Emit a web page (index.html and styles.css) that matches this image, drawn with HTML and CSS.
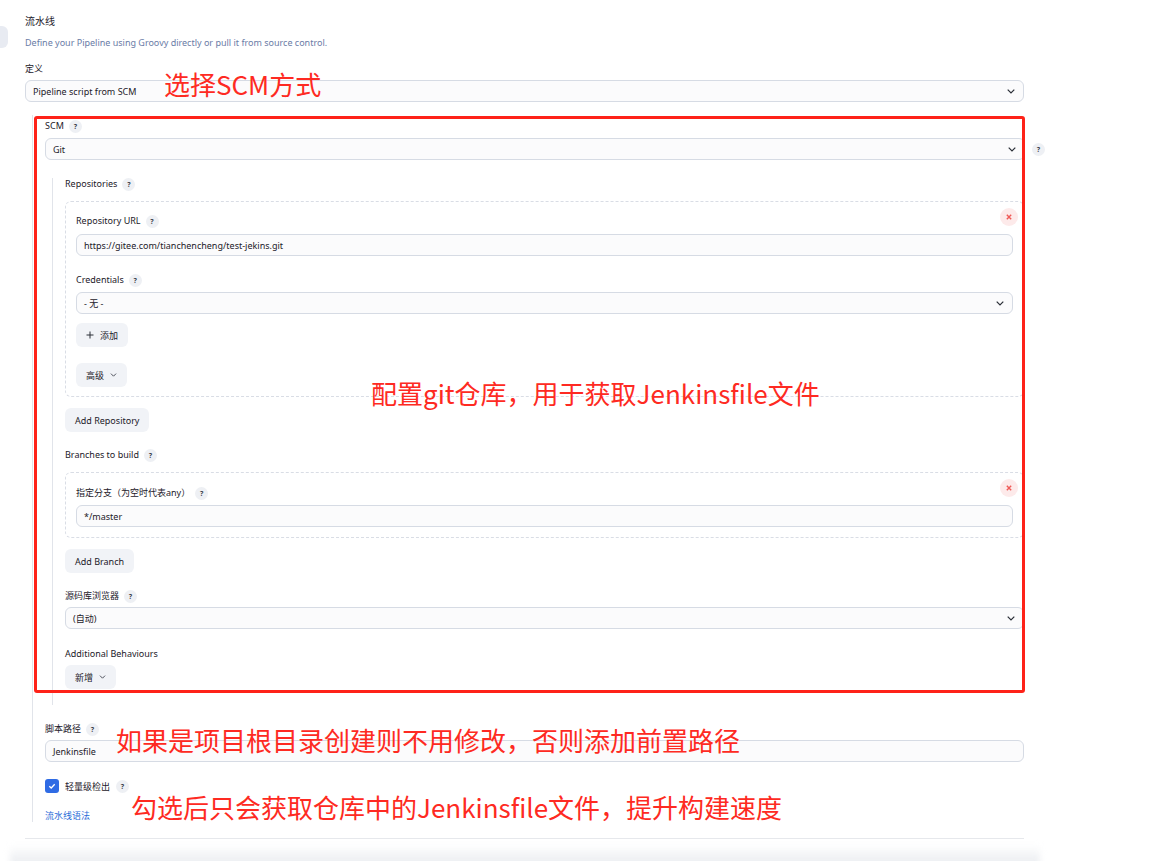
FILE: index.html
```html
<!DOCTYPE html>
<html lang="zh-CN">
<head>
<meta charset="utf-8">
<title>流水线</title>
<link rel="stylesheet" href="styles.css">
</head>
<body>
<div class="layout">
  <aside class="side"><div class="side-item"></div></aside>
  <main class="main">
    <div class="title">流水线</div>
    <div class="desc">Define your Pipeline using Groovy directly or pull it from source control.</div>
    <div class="label mt14">定义</div>
    <div class="ctl select mt5"><span>Pipeline script from SCM</span><svg class="chev" viewBox="0 0 8 5"><path d="M0.7 0.7L4 4L7.3 0.7"/></svg></div>

    <div class="nest nest1">
      <div class="label">SCM <span class="help">?</span></div>
      <div class="row-help mt6">
        <div class="ctl select grow"><span>Git</span><svg class="chev" viewBox="0 0 8 5"><path d="M0.7 0.7L4 4L7.3 0.7"/></svg></div>
        <span class="help">?</span>
      </div>

      <div class="nest nest2">
        <div class="label">Repositories <span class="help">?</span></div>
        <div class="repeat repo">
          <span class="close"><svg viewBox="0 0 6 6"><path d="M0.8 0.8L5.2 5.2M5.2 0.8L0.8 5.2"/></svg></span>
          <div class="label">Repository URL <span class="help">?</span></div>
          <div class="ctl mt7">https://gitee.com/tianchencheng/test-jekins.git</div>
          <div class="label mt18">Credentials <span class="help">?</span></div>
          <div class="ctl select mt6"><span>- 无 -</span><svg class="chev" viewBox="0 0 8 5"><path d="M0.7 0.7L4 4L7.3 0.7"/></svg></div>
          <div class="btn mt9"><svg class="plus" viewBox="0 0 8 8"><path d="M4 0.5V7.5M0.5 4H7.5"/></svg>添加</div>
          <div class="btn mt16">高级<svg class="chev-sm" viewBox="0 0 8 5"><path d="M0.8 0.8L4 4L7.2 0.8"/></svg></div>
        </div>
        <div class="btn mt11">Add Repository</div>

        <div class="label mt17">Branches to build <span class="help">?</span></div>
        <div class="repeat branch">
          <span class="close"><svg viewBox="0 0 6 6"><path d="M0.8 0.8L5.2 5.2M5.2 0.8L0.8 5.2"/></svg></span>
          <div class="label">指定分支（为空时代表any） <span class="help">?</span></div>
          <div class="ctl mt6">*/master</div>
        </div>
        <div class="btn mt11">Add Branch</div>

        <div class="label mt17">源码库浏览器 <span class="help">?</span></div>
        <div class="ctl select mt5"><span>(自动)</span><svg class="chev" viewBox="0 0 8 5"><path d="M0.7 0.7L4 4L7.3 0.7"/></svg></div>

        <div class="label mt19">Additional Behaviours</div>
        <div class="btn mt5">新增<svg class="chev-sm" viewBox="0 0 8 5"><path d="M0.8 0.8L4 4L7.2 0.8"/></svg></div>
      </div>

      <div class="label mt18">脚本路径 <span class="help">?</span></div>
      <div class="ctl mt5">Jenkinsfile</div>

      <div class="check-row">
        <span class="checkbox"><svg viewBox="0 0 10 10"><path d="M2.3 5.2L4.2 7L7.7 3.2"/></svg></span>
        <span>轻量级检出</span>
        <span class="help">?</span>
      </div>
      <a class="link">流水线语法</a>
    </div>

    <div class="divider"></div>
    <div class="footer-fade"></div>
  </main>
</div>

<div class="annot-box"></div>
<div class="annot a1">选择SCM方式</div>
<div class="annot a2">配置git仓库，用于获取Jenkinsfile文件</div>
<div class="annot a3">如果是项目根目录创建则不用修改，否则添加前置路径</div>
<div class="annot a4">勾选后只会获取仓库中的Jenkinsfile文件，提升构建速度</div>
</body>
</html>
```

FILE: styles.css
```css
html, body {
  margin: 0;
  padding: 0;
}
body {
  font-family: "Noto Sans", "Noto Sans CJK SC", sans-serif;
  font-size: 9px;
  color: #1c2029;
  background: #ffffff;
  width: 1169px;
  height: 861px;
  overflow: hidden;
  position: relative;
}
.layout {
  display: flex;
}
.side {
  width: 8px;
  padding-top: 26px;
}
.side-item {
  height: 22px;
  background: #e8ebf2;
  border-radius: 0 6px 6px 0;
}
.main {
  margin-left: 17px;
  width: 999px;
  padding-top: 15px;
}
.title {
  font-size: 10px;
  line-height: 12px;
  height: 12px;
}
.desc {
  margin-top: 10px;
  line-height: 12px;
  height: 12px;
  color: #6a7ca6;
}
.label {
  display: flex;
  align-items: center;
  gap: 5px;
  height: 12px;
  line-height: 12px;
  white-space: nowrap;
}
.help {
  width: 13px;
  height: 13px;
  flex: none;
  border-radius: 50%;
  background: #eef0f4;
  color: #3a3f4a;
  font-size: 7px;
  font-weight: 700;
  line-height: 13px;
  text-align: center;
}
.ctl {
  height: 22px;
  box-sizing: border-box;
  border: 1px solid #d6dbe4;
  border-radius: 6px;
  background: #fbfbfc;
  display: flex;
  align-items: center;
  padding: 0 8px 0 7px;
  white-space: nowrap;
}
.select {
  justify-content: space-between;
}
.chev {
  width: 8px;
  height: 5px;
  fill: none;
  stroke: #2a2e36;
  stroke-width: 1.2;
}
.grow {
  flex: 1;
}
.row-help {
  display: flex;
  align-items: center;
  gap: 7px;
  margin-right: -21px;
}
.nest {
  border-left: 1px solid #e1e4ea;
  margin-left: 7px;
  padding-left: 12px;
}
.nest1 {
  margin-top: 13px;
  padding-top: 5px;
}
.nest2 {
  margin-top: 18px;
  padding-bottom: 16px;
}
.repeat {
  position: relative;
  margin-top: 11px;
  border: 1px dashed #d9dde5;
  border-radius: 6px;
  padding: 13px 10px 9px 10px;
}
.repeat.branch {
  padding-top: 14px;
  padding-bottom: 10px;
}
.close {
  position: absolute;
  top: 6px;
  right: 5px;
  width: 18px;
  height: 18px;
  border-radius: 50%;
  background: #fdeaea;
  display: flex;
  align-items: center;
  justify-content: center;
}
.close svg {
  width: 6px;
  height: 6px;
  fill: none;
  stroke: #ef5a57;
  stroke-width: 1.4;
}
.btn {
  display: flex;
  width: max-content;
  align-items: center;
  gap: 6px;
  height: 24px;
  box-sizing: border-box;
  padding: 0 10px;
  border-radius: 6px;
  background: #f1f3f7;
  white-space: nowrap;
}
.plus {
  width: 8px;
  height: 8px;
  fill: none;
  stroke: #2a2e36;
  stroke-width: 1;
}
.chev-sm {
  width: 7px;
  height: 4px;
  fill: none;
  stroke: #3a3f4a;
  stroke-width: 1.1;
}
.check-row {
  margin-top: 17px;
  display: flex;
  align-items: center;
  gap: 6px;
  height: 14px;
}
.checkbox {
  width: 14px;
  height: 14px;
  border-radius: 3px;
  background: #2f6be4;
  display: flex;
  align-items: center;
  justify-content: center;
}
.checkbox svg {
  width: 10px;
  height: 10px;
  fill: none;
  stroke: #ffffff;
  stroke-width: 1.3;
}
.link {
  display: block;
  margin-top: 17px;
  line-height: 12px;
  height: 12px;
  color: #2a6bd8;
}
.divider {
  margin-top: 16px;
  height: 1px;
  background: #e6e8ec;
}
.footer-fade {
  margin-top: 6px;
  margin-left: -15px;
  width: 1030px;
  height: 24px;
  background: linear-gradient(to bottom, rgba(240, 241, 244, 0), #eef0f3 60%);
  filter: blur(3px);
}
.mt5 { margin-top: 5px; }
.mt6 { margin-top: 6px; }
.mt7 { margin-top: 7px; }
.mt9 { margin-top: 9px; }
.mt11 { margin-top: 11px; }
.mt14 { margin-top: 14px; }
.mt16 { margin-top: 16px; }
.mt17 { margin-top: 17px; }
.mt18 { margin-top: 18px; }
.mt19 { margin-top: 19px; }

.annot-box {
  position: absolute;
  left: 34px;
  top: 116px;
  width: 991px;
  height: 577px;
  box-sizing: border-box;
  border: 3px solid #fe2218;
  border-radius: 3px;
}
.annot {
  position: absolute;
  font-family: "Noto Sans CJK SC", sans-serif;
  font-size: 26px;
  color: #fe2a22;
  line-height: 1;
  white-space: nowrap;
}
.a1 { left: 164px; top: 71px; }
.a2 { left: 371px; top: 380px; }
.a3 { left: 116px; top: 727px; }
.a4 { left: 131px; top: 794px; }
```
